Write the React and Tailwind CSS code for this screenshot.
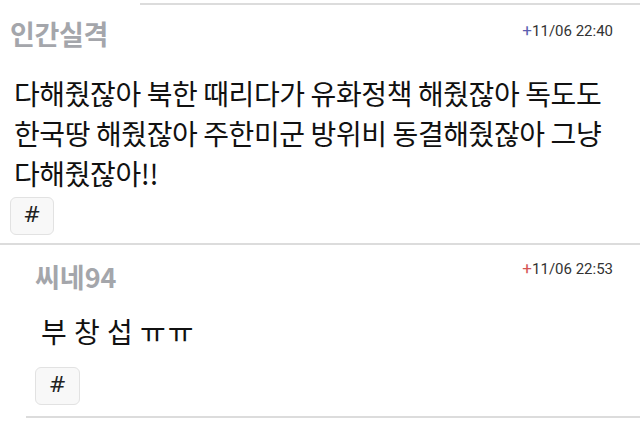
export default function App() {
  const kr = { fontFamily: '"Noto Sans CJK KR", "Noto Sans", sans-serif' };
  return (
    <div className="w-[640px] h-[422px] bg-white overflow-hidden relative" style={kr}>
      <div className="ml-[140px] mt-[3px] h-[2px] bg-[#dcdcdc]" />
      <div className="pl-[10px] pr-[27px]">
        <div className="flex items-start justify-between h-[50px]">
          <div className="mt-[13px] text-[27px] leading-[32px] font-bold text-[#a4a6ab] tracking-[-0.3px]">인간실격</div>
          <div className="mt-[15px] text-[15px] leading-[20px] text-[#333] font-['Roboto']">
            <span className="text-[#5c5fb0] text-[17px] leading-[20px]">+</span>11/06 22:40
          </div>
        </div>
        <div className="pl-[4px] mt-[18px] text-[28px] leading-[40px] text-[#111] tracking-[-0.4px] whitespace-nowrap">
          <div>다해줬잖아 북한 때리다가 유화정책 해줬잖아 독도도</div>
          <div>한국땅 해줬잖아 주한미군 방위비 동결해줬잖아 그냥</div>
          <div>다해줬잖아!!</div>
        </div>
        <div className="mt-[4px] w-[44px] h-[38px] rounded-[6px] border border-[#e2e2e2] bg-[#f8f8f8] flex items-center justify-center text-[21px] text-[#222] font-['DejaVu_Sans']">#</div>
      </div>
      <div className="mt-[8px] h-[2px] bg-[#dcdcdc]" />
      <div className="pl-[35px] pr-[27px]">
        <div className="flex items-start justify-between h-[50px]">
          <div className="mt-[16px] text-[27px] leading-[32px] font-bold text-[#a4a6ab] tracking-[0px]">씨네94</div>
          <div className="mt-[13px] text-[15px] leading-[20px] text-[#333] font-['Roboto']">
            <span className="text-[#d45555] text-[17px] leading-[20px]">+</span>11/06 22:53
          </div>
        </div>
        <div className="pl-[6px] mt-[16px] text-[28px] leading-[40px] text-[#111] tracking-[0.5px] whitespace-nowrap">
          부 창 섭 <span className="tracking-[2px]">ㅠㅠ</span>
        </div>
        <div className="mt-[16px] w-[45px] h-[38px] rounded-[6px] border border-[#e2e2e2] bg-[#f8f8f8] flex items-center justify-center text-[21px] text-[#222] font-['DejaVu_Sans']">#</div>
      </div>
      <div className="ml-[26px] mt-[11px] h-[2px] bg-[#dcdcdc]" />
    </div>
  );
}
